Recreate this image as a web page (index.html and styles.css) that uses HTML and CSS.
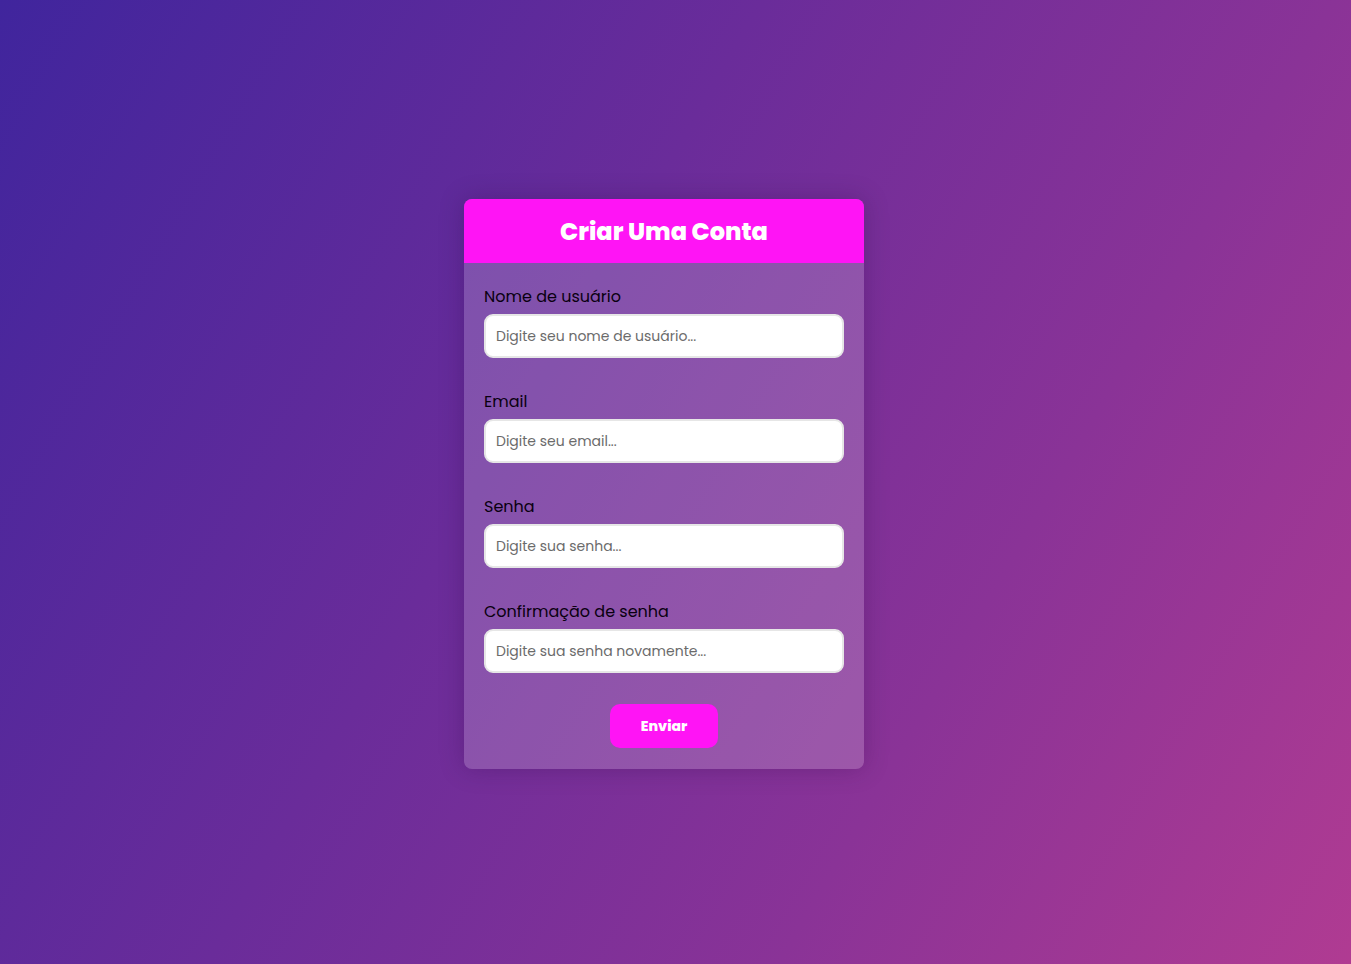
FILE: index.html
```html
<!DOCTYPE html>
<html lang="pt-BR">
<head>
<meta charset="utf-8">
<title>Criar Uma Conta</title>
<link rel="stylesheet" href="styles.css">
</head>
<body>
<main class="page">
  <form class="card">
    <header class="card-header">
      <h1 class="card-title">Criar Uma Conta</h1>
    </header>
    <div class="card-body">
      <div class="field">
        <label class="field-label" for="user">Nome de usuário</label>
        <input class="field-input" id="user" type="text" placeholder="Digite seu nome de usuário...">
      </div>
      <div class="field">
        <label class="field-label" for="email">Email</label>
        <input class="field-input" id="email" type="email" placeholder="Digite seu email...">
      </div>
      <div class="field">
        <label class="field-label" for="pass">Senha</label>
        <input class="field-input" id="pass" type="password" placeholder="Digite sua senha...">
      </div>
      <div class="field">
        <label class="field-label" for="pass2">Confirmação de senha</label>
        <input class="field-input" id="pass2" type="password" placeholder="Digite sua senha novamente...">
      </div>
      <div class="actions">
        <button class="submit" type="button">Enviar</button>
      </div>
    </div>
  </form>
</main>
</body>
</html>
```
FILE: styles.css
```css
* { box-sizing: border-box; }
html, body { margin: 0; height: 100%; }
body {
  font-family: "Poppins", "Open Sans", "DejaVu Sans", sans-serif;
  background: linear-gradient(120deg, #40259d 0%, #6a2c9a 40%, #8a3397 70%, #b03b92 100%);
}
.page {
  min-height: 100vh;
  display: flex;
  align-items: center;
  justify-content: center;
  padding: 4px 23px 0 0;
}
.card {
  width: 400px;
  border-radius: 8px;
  overflow: hidden;
  background: rgba(255, 255, 255, 0.18);
  box-shadow: 0 0 24px rgba(40, 0, 60, 0.25);
}
.card-header {
  height: 64px;
  padding-top: 1px;
  background: #ff14f5;
  display: flex;
  align-items: center;
  justify-content: center;
}
.card-title {
  margin: 0;
  color: #fff;
  font-size: 24px;
  font-weight: 800;
  letter-spacing: 0;
}
.card-body {
  padding: 22px 20px 21px;
}
.field {
  display: flex;
  flex-direction: column;
  margin-bottom: 32px;
}
.field-label {
  font-size: 16px;
  line-height: 24px;
  color: #0a0010;
  margin-bottom: 5px;
}
.field-input {
  height: 44px;
  border: 2px solid #e6e6e6;
  border-radius: 9px;
  padding: 1px 10px 0;
  font-family: inherit;
  font-size: 14px;
  color: #333;
  background: #fff;
  outline: none;
}
.field-input::placeholder { color: #6b6b6b; }
.actions {
  display: flex;
  justify-content: center;
  margin-top: -1px;
}
.submit {
  width: 108px;
  height: 44px;
  border: none;
  border-radius: 10px;
  background: #ff14f5;
  color: #fff;
  font-family: inherit;
  font-size: 14px;
  font-weight: 800;
  cursor: pointer;
}
```
